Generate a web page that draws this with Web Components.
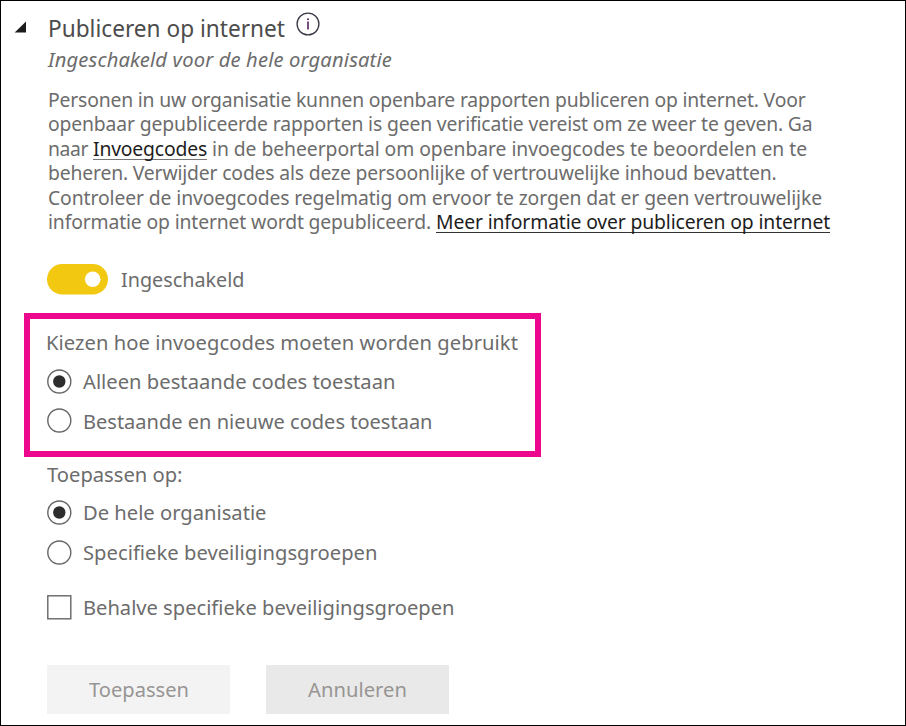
<!DOCTYPE html>
<html lang="nl">
<head>
<meta charset="utf-8">
<title>Publiceren op internet</title>
<style>
html,body{margin:0;padding:0;background:#fff}
body{font-family:"Noto Sans","Open Sans",sans-serif;font-size:20.8px;color:#6c6c6c}
</style>
</head>
<body>
<settings-page></settings-page>
<script>
const define = (name, html, setup) => {
  const t = document.createElement('template');
  t.innerHTML = html;
  customElements.define(name, class extends HTMLElement {
    connectedCallback() {
      if (this.shadowRoot) return;
      this.attachShadow({mode: 'open'}).append(t.content.cloneNode(true));
      if (setup) setup(this, this.shadowRoot);
    }
  });
};

/* Slightly condensed text run, tracked to the advance width given in its w attribute. */
define('fit-text', `<style>
:host{display:block;flex:none;white-space:nowrap}
span{display:inline-block;white-space:nowrap;transform-origin:0 50%}
</style><span><slot></slot></span>`, (el, root) => {
  const w = parseFloat(el.getAttribute('w'));
  const s = root.querySelector('span');
  const n = el.textContent.length;
  const natural = s.getBoundingClientRect().width;
  const k = Math.min(0.97, Math.max(0.93, w / natural));
  el.style.width = w + 'px';
  s.style.letterSpacing = ((w / k - natural) / n) + 'px';
  s.style.transform = 'scaleX(' + k + ')';
});

define('text-link', `<style>
:host{display:block;flex:none;color:#1d1d1d;height:23px;border-bottom:1.4px solid var(--line,#333)}
</style><slot></slot>`);

define('text-line', `<style>
:host{display:flex;height:24.4px;line-height:24.4px}
</style><slot></slot>`);

define('info-icon', `<style>:host{display:block;width:24px;height:24px}svg{display:block}</style>
<svg width="24" height="24" viewBox="0 0 24 24"><circle cx="12" cy="12" r="10.9" fill="none" stroke="#3b3b48" stroke-width="1.35"/><rect x="11.2" y="9.5" width="1.6" height="8" fill="#55235f"/><rect x="11.1" y="6.4" width="1.8" height="1.7" fill="#55235f"/></svg>`);

define('section-head', `<style>
:host{display:flex;height:36px;line-height:37px;font-size:23.6px;color:#4c4c4c}
svg{flex:none;margin:11px 21px 0 -33px}
info-icon{margin:2px 0 0 11px}
</style><svg width="13" height="13" viewBox="0 0 13 13"><path d="M0.7 11.6H12V0.6Z" fill="#1c1c1c"/></svg><slot></slot><info-icon></info-icon>`);

define('toggle-switch', `<style>
:host{display:flex;align-items:center;height:30.5px;line-height:30px}
svg{flex:none;margin-right:12.5px}
</style><svg width="61" height="31" viewBox="0 0 61 31"><rect width="61" height="30.6" rx="15.3" fill="#f2c811"/><circle cx="45.7" cy="15.3" r="7.8" fill="#fff"/></svg><slot></slot>`);

define('radio-option', `<style>
:host{display:flex;align-items:center;height:39.7px;line-height:26px}
svg{flex:none;margin-right:11px}
circle.dot{display:none}
:host([checked]) circle.dot{display:inline}
</style><svg width="25" height="25" viewBox="0 0 25 25"><circle cx="12.3" cy="12.5" r="11.5" fill="#fff" stroke="#666" stroke-width="1.4"/><circle class="dot" cx="12.3" cy="12.5" r="6.2" fill="#2d2d2d"/></svg><slot></slot>`);

define('check-option', `<style>
:host{display:flex;align-items:center;height:40px;line-height:26px}
svg{flex:none;margin-right:11px}
</style><svg width="25" height="25" viewBox="0 0 25 25"><rect x=".8" y=".8" width="23" height="23" fill="#fff" stroke="#666" stroke-width="1.4"/></svg><slot></slot>`);

define('highlight-box', `<style>
:host{display:block;box-sizing:border-box;width:517px;height:144px;margin:18.5px 0 0 -23px;border:6px solid #ec078c;padding:10.5px 0 0 17px}
</style><slot></slot>`);

define('action-button', `<style>
:host{display:flex;align-items:center;justify-content:center;width:183px;height:49px;line-height:26px;color:#979593;background:var(--fill)}
</style><slot></slot>`);

define('settings-page', `<style>
:host{display:block;box-sizing:border-box;width:906px;height:726px;border:1px solid #000;background:#fff;padding:9px 0 0 46px;overflow:hidden}
.sub{font-style:italic;line-height:26px;height:26px;padding-left:.5px}
.para{margin:15px 0 30.6px .7px}
.label{line-height:26px;height:26px}
.kiezen{margin:0 0 5.8px -1px}
.apply{margin:4px 0 5.7px}
check-option{margin-top:15px}
.buttons{display:flex;gap:36px;margin-top:37.5px}
</style>
<section-head><fit-text w="237">Publiceren op internet</fit-text></section-head>
<div class="sub"><fit-text w="344">Ingeschakeld voor de hele organisatie</fit-text></div>
<div class="para">
<text-line><fit-text w="757.5">Personen in uw organisatie kunnen openbare rapporten publiceren op internet. Voor</fit-text></text-line>
<text-line><fit-text w="764.5">openbaar gepubliceerde rapporten is geen verificatie vereist om ze weer te geven. Ga</fit-text></text-line>
<text-line style="gap:5px"><fit-text w="40">naar</fit-text><text-link style="--line:#777"><fit-text w="114">Invoegcodes</fit-text></text-link><fit-text w="595">in de beheerportal om openbare invoegcodes te beoordelen en te</fit-text></text-line>
<text-line><fit-text w="728.5">beheren. Verwijder codes als deze persoonlijke of vertrouwelijke inhoud bevatten.</fit-text></text-line>
<text-line><fit-text w="774">Controleer de invoegcodes regelmatig om ervoor te zorgen dat er geen vertrouwelijke</fit-text></text-line>
<text-line style="gap:5px"><fit-text w="383">informatie op internet wordt gepubliceerd.</fit-text><text-link><fit-text w="394">Meer informatie over publiceren op internet</fit-text></text-link></text-line>
</div>
<toggle-switch><fit-text w="123.5">Ingeschakeld</fit-text></toggle-switch>
<highlight-box>
<div class="label kiezen"><fit-text w="472">Kiezen hoe invoegcodes moeten worden gebruikt</fit-text></div>
<radio-option checked><fit-text w="312.5">Alleen bestaande codes toestaan</fit-text></radio-option>
<radio-option><fit-text w="349.5">Bestaande en nieuwe codes toestaan</fit-text></radio-option>
</highlight-box>
<div class="label apply"><fit-text w="135.5">Toepassen op:</fit-text></div>
<radio-option checked><fit-text w="183.5">De hele organisatie</fit-text></radio-option>
<radio-option><fit-text w="294.5">Specifieke beveiligingsgroepen</fit-text></radio-option>
<check-option><fit-text w="371.5">Behalve specifieke beveiligingsgroepen</fit-text></check-option>
<div class="buttons">
<action-button style="--fill:#f3f3f3"><fit-text w="100">Toepassen</fit-text></action-button>
<action-button style="--fill:#e9e9e9"><fit-text w="99">Annuleren</fit-text></action-button>
</div>`);
</script>
</body>
</html>
